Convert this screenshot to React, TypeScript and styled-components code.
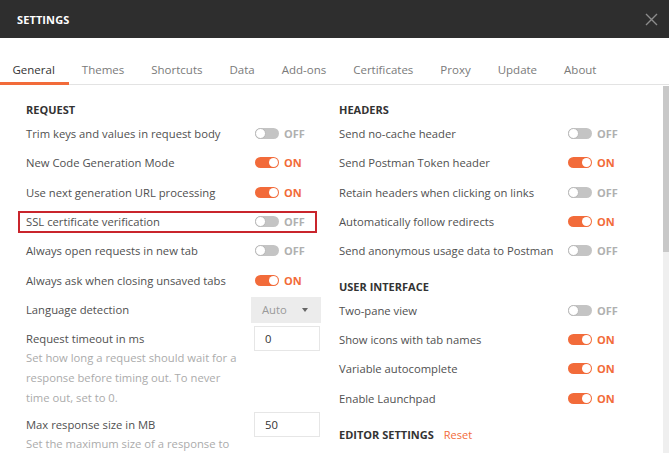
import React from "react";
import styled, { createGlobalStyle } from "styled-components";

const Global = createGlobalStyle`
  html, body { margin: 0; padding: 0; background: #ffffff; }
  body { font-family: "Open Sans", "Noto Sans", sans-serif; }
  * { box-sizing: border-box; }
`;

const Shell = styled.div`
  width: 669px;
  height: 453px;
  overflow: hidden;
  display: flex;
  flex-direction: column;
  background: #fff;
`;

const TitleBar = styled.div`
  height: 38px;
  flex: none;
  background: #2e2e2e;
  display: flex;
  align-items: center;
  justify-content: space-between;
  padding: 0 10px 0 17px;
`;

const Title = styled.div`
  color: #ffffff;
  font-size: 11px;
  font-weight: 700;
  letter-spacing: 0.1px;
`;

const CloseBtn = styled.div`
  width: 16px;
  height: 16px;
  display: flex;
  align-items: center;
  justify-content: center;
`;

const TabBar = styled.div`
  height: 47px;
  flex: none;
  display: flex;
  align-items: flex-end;
  border-bottom: 1px solid #e3e3e3;
`;

const Tab = styled.div<{ $active?: boolean }>`
  height: 100%;
  padding: 0 14.5px 0 12.5px;
  display: flex;
  align-items: center;
  padding-top: 17px;
  font-size: 11.5px;
  color: ${(p) => (p.$active ? "#333333" : "#7a7a7a")};
  border-bottom: 3px solid ${(p) => (p.$active ? "#f26b3a" : "transparent")};
  margin-bottom: -1px;
`;

const Body = styled.div`
  flex: 1;
  display: flex;
  min-height: 0;
`;

const Columns = styled.div`
  flex: 1;
  display: grid;
  grid-template-columns: 294px 294px;
  column-gap: 19px;
  padding: 16px 0 0 26px;
  align-content: start;
`;

const Column = styled.div`
  display: flex;
  flex-direction: column;
`;

const Heading = styled.div<{ $gap?: number }>`
  height: 18px;
  line-height: 18px;
  font-size: 11px;
  font-weight: 700;
  color: #333333;
  margin-top: ${(p) => p.$gap ?? 0}px;
  display: flex;
  gap: 10px;
`;

const ResetLink = styled.span`
  font-weight: 400;
  color: #f26b3a;
`;

const Row = styled.div<{ $highlight?: boolean }>`
  position: relative;
  height: 29.33px;
  display: grid;
  grid-template-columns: 224px 1fr;
  align-items: center;
  font-size: 11.25px;
  color: #505050;
  &::before {
    content: "";
    display: ${(p) => (p.$highlight ? "block" : "none")};
    position: absolute;
    left: -8px;
    right: 3px;
    top: 4px;
    bottom: 3px;
    border: 2px solid #c9252c;
  }
`;

const Label = styled.div`
  white-space: nowrap;
`;

const ToggleWrap = styled.div`
  display: flex;
  align-items: center;
  gap: 5px;
  padding-left: 5px;
`;

const Track = styled.div<{ $on: boolean }>`
  width: 24px;
  height: 11px;
  border-radius: 6px;
  background: ${(p) => (p.$on ? "#f26b3a" : "#c4c4c4")};
  display: flex;
  align-items: center;
  justify-content: ${(p) => (p.$on ? "flex-end" : "flex-start")};
  padding: 0 1px;
`;

const Knob = styled.div<{ $on: boolean }>`
  width: ${(p) => (p.$on ? 9 : 11)}px;
  height: ${(p) => (p.$on ? 9 : 11)}px;
  border-radius: 50%;
  background: #ffffff;
  margin-left: ${(p) => (p.$on ? 0 : -1)}px;
  border: ${(p) => (p.$on ? "none" : "1px solid #b8b8b8")};
`;

const StateText = styled.span<{ $on: boolean }>`
  font-size: 11px;
  font-weight: 700;
  color: ${(p) => (p.$on ? "#f26b3a" : "#b0b0b0")};
`;

const SelectBox = styled.div`
  width: 70px;
  height: 26px;
  margin-left: 1px;
  background: #ececec;
  display: flex;
  align-items: center;
  justify-content: space-between;
  padding: 0 13px 0 11px;
  color: #9a9a9a;
  font-size: 11.25px;
`;

const Caret = styled.span`
  width: 0;
  height: 0;
  border-left: 3.5px solid transparent;
  border-right: 3.5px solid transparent;
  border-top: 4px solid #666;
`;

const Field = styled.div<{ $mt: number }>`
  display: grid;
  grid-template-columns: 228px 66px;
  margin-top: ${(p) => p.$mt}px;
`;

const FieldText = styled.div`
  display: flex;
  flex-direction: column;
`;

const FieldLabel = styled.div`
  font-size: 11.25px;
  line-height: 25px;
  color: #505050;
`;

const FieldDesc = styled.div`
  font-size: 11.25px;
  line-height: 20px;
  color: #ababab;
  max-width: 215px;
  margin-top: -3px;
`;

const NumberBox = styled.div`
  width: 66px;
  height: 25px;
  border: 1px solid #e6e6e6;
  background: #fff;
  font-size: 11.25px;
  color: #333;
  display: flex;
  align-items: center;
  padding-left: 10px;
`;

const ScrollTrack = styled.div`
  width: 6px;
  flex: none;
  background: #efefef;
  margin-top: 1px;
`;

const ScrollThumb = styled.div`
  height: 166px;
  background: #c8c8c8;
`;

type T = { label: string; on: boolean; highlight?: boolean };

const Toggle = ({ on }: { on: boolean }) => (
  <ToggleWrap>
    <Track $on={on}>
      <Knob $on={on} />
    </Track>
    <StateText $on={on}>{on ? "ON" : "OFF"}</StateText>
  </ToggleWrap>
);

const request: T[] = [
  { label: "Trim keys and values in request body", on: false },
  { label: "New Code Generation Mode", on: true },
  { label: "Use next generation URL processing", on: true },
  { label: "SSL certificate verification", on: false, highlight: true },
  { label: "Always open requests in new tab", on: false },
  { label: "Always ask when closing unsaved tabs", on: true },
];

const headers: T[] = [
  { label: "Send no-cache header", on: false },
  { label: "Send Postman Token header", on: true },
  { label: "Retain headers when clicking on links", on: false },
  { label: "Automatically follow redirects", on: true },
  { label: "Send anonymous usage data to Postman", on: false },
];

const ui: T[] = [
  { label: "Two-pane view", on: false },
  { label: "Show icons with tab names", on: true },
  { label: "Variable autocomplete", on: true },
  { label: "Enable Launchpad", on: true },
];

const tabs = ["General", "Themes", "Shortcuts", "Data", "Add-ons", "Certificates", "Proxy", "Update", "About"];

const ToggleRows = ({ items }: { items: T[] }) => (
  <>
    {items.map((r) => (
      <Row key={r.label} $highlight={r.highlight}>
        <Label>{r.label}</Label>
        <Toggle on={r.on} />
      </Row>
    ))}
  </>
);

export default function App() {
  return (
    <Shell>
      <Global />
      <TitleBar>
        <Title>SETTINGS</Title>
        <CloseBtn>
          <svg width="13" height="13" viewBox="0 0 13 13">
            <path d="M1 1 L12 12 M12 1 L1 12" stroke="#8c8c8c" strokeWidth="1.4" />
          </svg>
        </CloseBtn>
      </TitleBar>
      <TabBar>
        {tabs.map((t, i) => (
          <Tab key={t} $active={i === 0}>
            {t}
          </Tab>
        ))}
      </TabBar>
      <Body>
        <Columns>
          <Column>
            <Heading>REQUEST</Heading>
            <ToggleRows items={request} />
            <Row>
              <Label>Language detection</Label>
              <SelectBox>
                Auto
                <Caret />
              </SelectBox>
            </Row>
            <Field $mt={2}>
              <FieldText>
                <FieldLabel>Request timeout in ms</FieldLabel>
                <FieldDesc>
                  Set how long a request should wait for a response before timing out. To never time out, set to 0.
                </FieldDesc>
              </FieldText>
              <NumberBox>0</NumberBox>
            </Field>
            <Field $mt={4}>
              <FieldText>
                <FieldLabel>Max response size in MB</FieldLabel>
                <FieldDesc>Set the maximum size of a response to download.</FieldDesc>
              </FieldText>
              <NumberBox>50</NumberBox>
            </Field>
          </Column>
          <Column>
            <Heading>HEADERS</Heading>
            <ToggleRows items={headers} />
            <Heading $gap={12}>USER INTERFACE</Heading>
            <ToggleRows items={ui} />
            <Heading $gap={13}>
              EDITOR SETTINGS <ResetLink>Reset</ResetLink>
            </Heading>
          </Column>
        </Columns>
        <ScrollTrack>
          <ScrollThumb />
        </ScrollTrack>
      </Body>
    </Shell>
  );
}
